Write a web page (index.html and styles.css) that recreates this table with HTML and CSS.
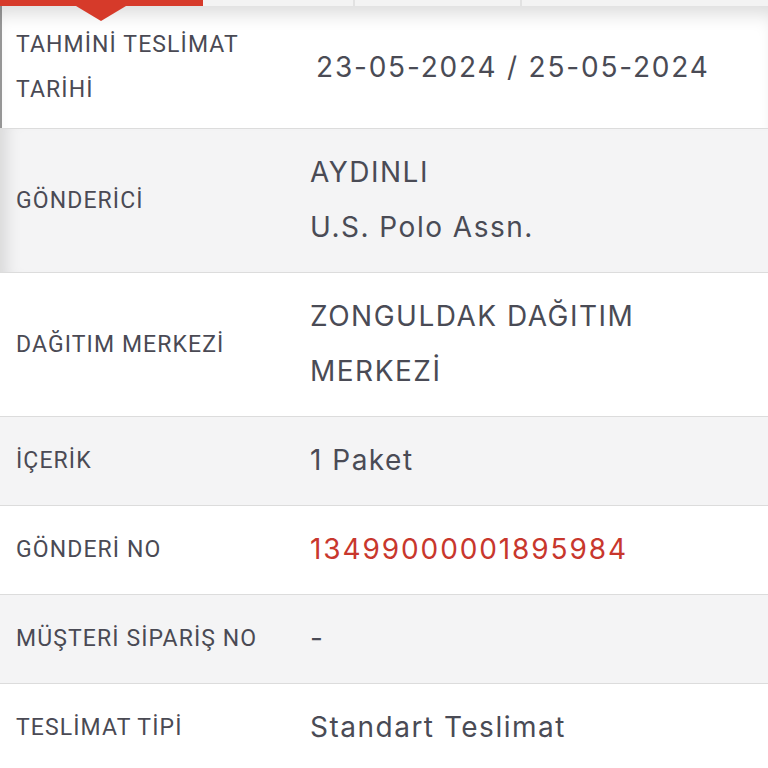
FILE: index.html
```html
<!DOCTYPE html>
<html lang="tr">
<head>
<meta charset="utf-8">
<link rel="stylesheet" href="styles.css">
</head>
<body>
<div class="tabs">
  <div class="tab active"><span class="caret"></span></div>
  <div class="tab"></div>
  <div class="tab"></div>
  <div class="tab"></div>
</div>
<div class="table">
  <div class="row first">
    <div class="label">TAHMİNİ TESLİMAT<br>TARİHİ</div>
    <div class="value date">23-05-2024 / 25-05-2024</div>
  </div>
  <div class="row alt">
    <div class="label">GÖNDERİCİ</div>
    <div class="value">AYDINLI<br>U.S. Polo Assn.</div>
  </div>
  <div class="row">
    <div class="label">DAĞITIM MERKEZİ</div>
    <div class="value">ZONGULDAK DAĞITIM<br>MERKEZİ</div>
  </div>
  <div class="row alt">
    <div class="label">İÇERİK</div>
    <div class="value">1 Paket</div>
  </div>
  <div class="row">
    <div class="label">GÖNDERİ NO</div>
    <div class="value red">13499000001895984</div>
  </div>
  <div class="row alt">
    <div class="label">MÜŞTERİ SİPARİŞ NO</div>
    <div class="value">-</div>
  </div>
  <div class="row">
    <div class="label">TESLİMAT TİPİ</div>
    <div class="value">Standart Teslimat</div>
  </div>
</div>
</body>
</html>
```
FILE: styles.css
```css
* { box-sizing: border-box; }
html, body { margin: 0; padding: 0; background: #fff; }
body { width: 768px; height: 768px; overflow: hidden; }

.tabs {
  display: flex;
  height: 6px;
  background: #f3f3f3;
  position: relative;
  z-index: 2;
}
.tab {
  flex: 0 0 auto;
  height: 6px;
  border-right: 2px solid #e2e2e2;
  position: relative;
}
.tab:nth-child(1) { width: 203px; background: #d63a2a; border-right: none; }
.tab:nth-child(2) { width: 152px; }
.tab:nth-child(3) { width: 167px; }
.tab:nth-child(4) { flex: 1; border-right: none; }
.caret {
  position: absolute;
  left: 76px;
  top: 6px;
  width: 0;
  height: 0;
  border-left: 25px solid transparent;
  border-right: 25px solid transparent;
  border-top: 15px solid #d63a2a;
}

.table {
  display: flex;
  flex-direction: column;
}
.row {
  display: grid;
  grid-template-columns: 310px 1fr;
  align-items: center;
  padding: 16px 0 17px;
  border-bottom: 1px solid #dcdcdc;
  background: #fff;
}
.row.alt { background: #f4f4f5; }
.row.first {
  height: 123px;
  padding: 0;
  box-shadow: inset 0 16px 18px -8px rgba(0,0,0,0.14), inset 2px 0 0 #9a9a9a;
}
.row.alt:nth-child(2) {
  box-shadow: inset 18px 0 16px -12px rgba(0,0,0,0.12);
}

.label {
  padding-left: 16px;
  font-family: Roboto, "Liberation Sans", sans-serif;
  font-size: 23px;
  line-height: 45px;
  color: #4a4a54;
  letter-spacing: 1.1px;
}
.value {
  font-family: Inter, "Noto Sans", sans-serif;
  font-size: 28px;
  line-height: 55px;
  color: #4a4b55;
  letter-spacing: 1.5px;
}
.value.date { padding-left: 6px; letter-spacing: 1.8px; }
.value.red { color: #c8372d; letter-spacing: 1.9px; }
```
